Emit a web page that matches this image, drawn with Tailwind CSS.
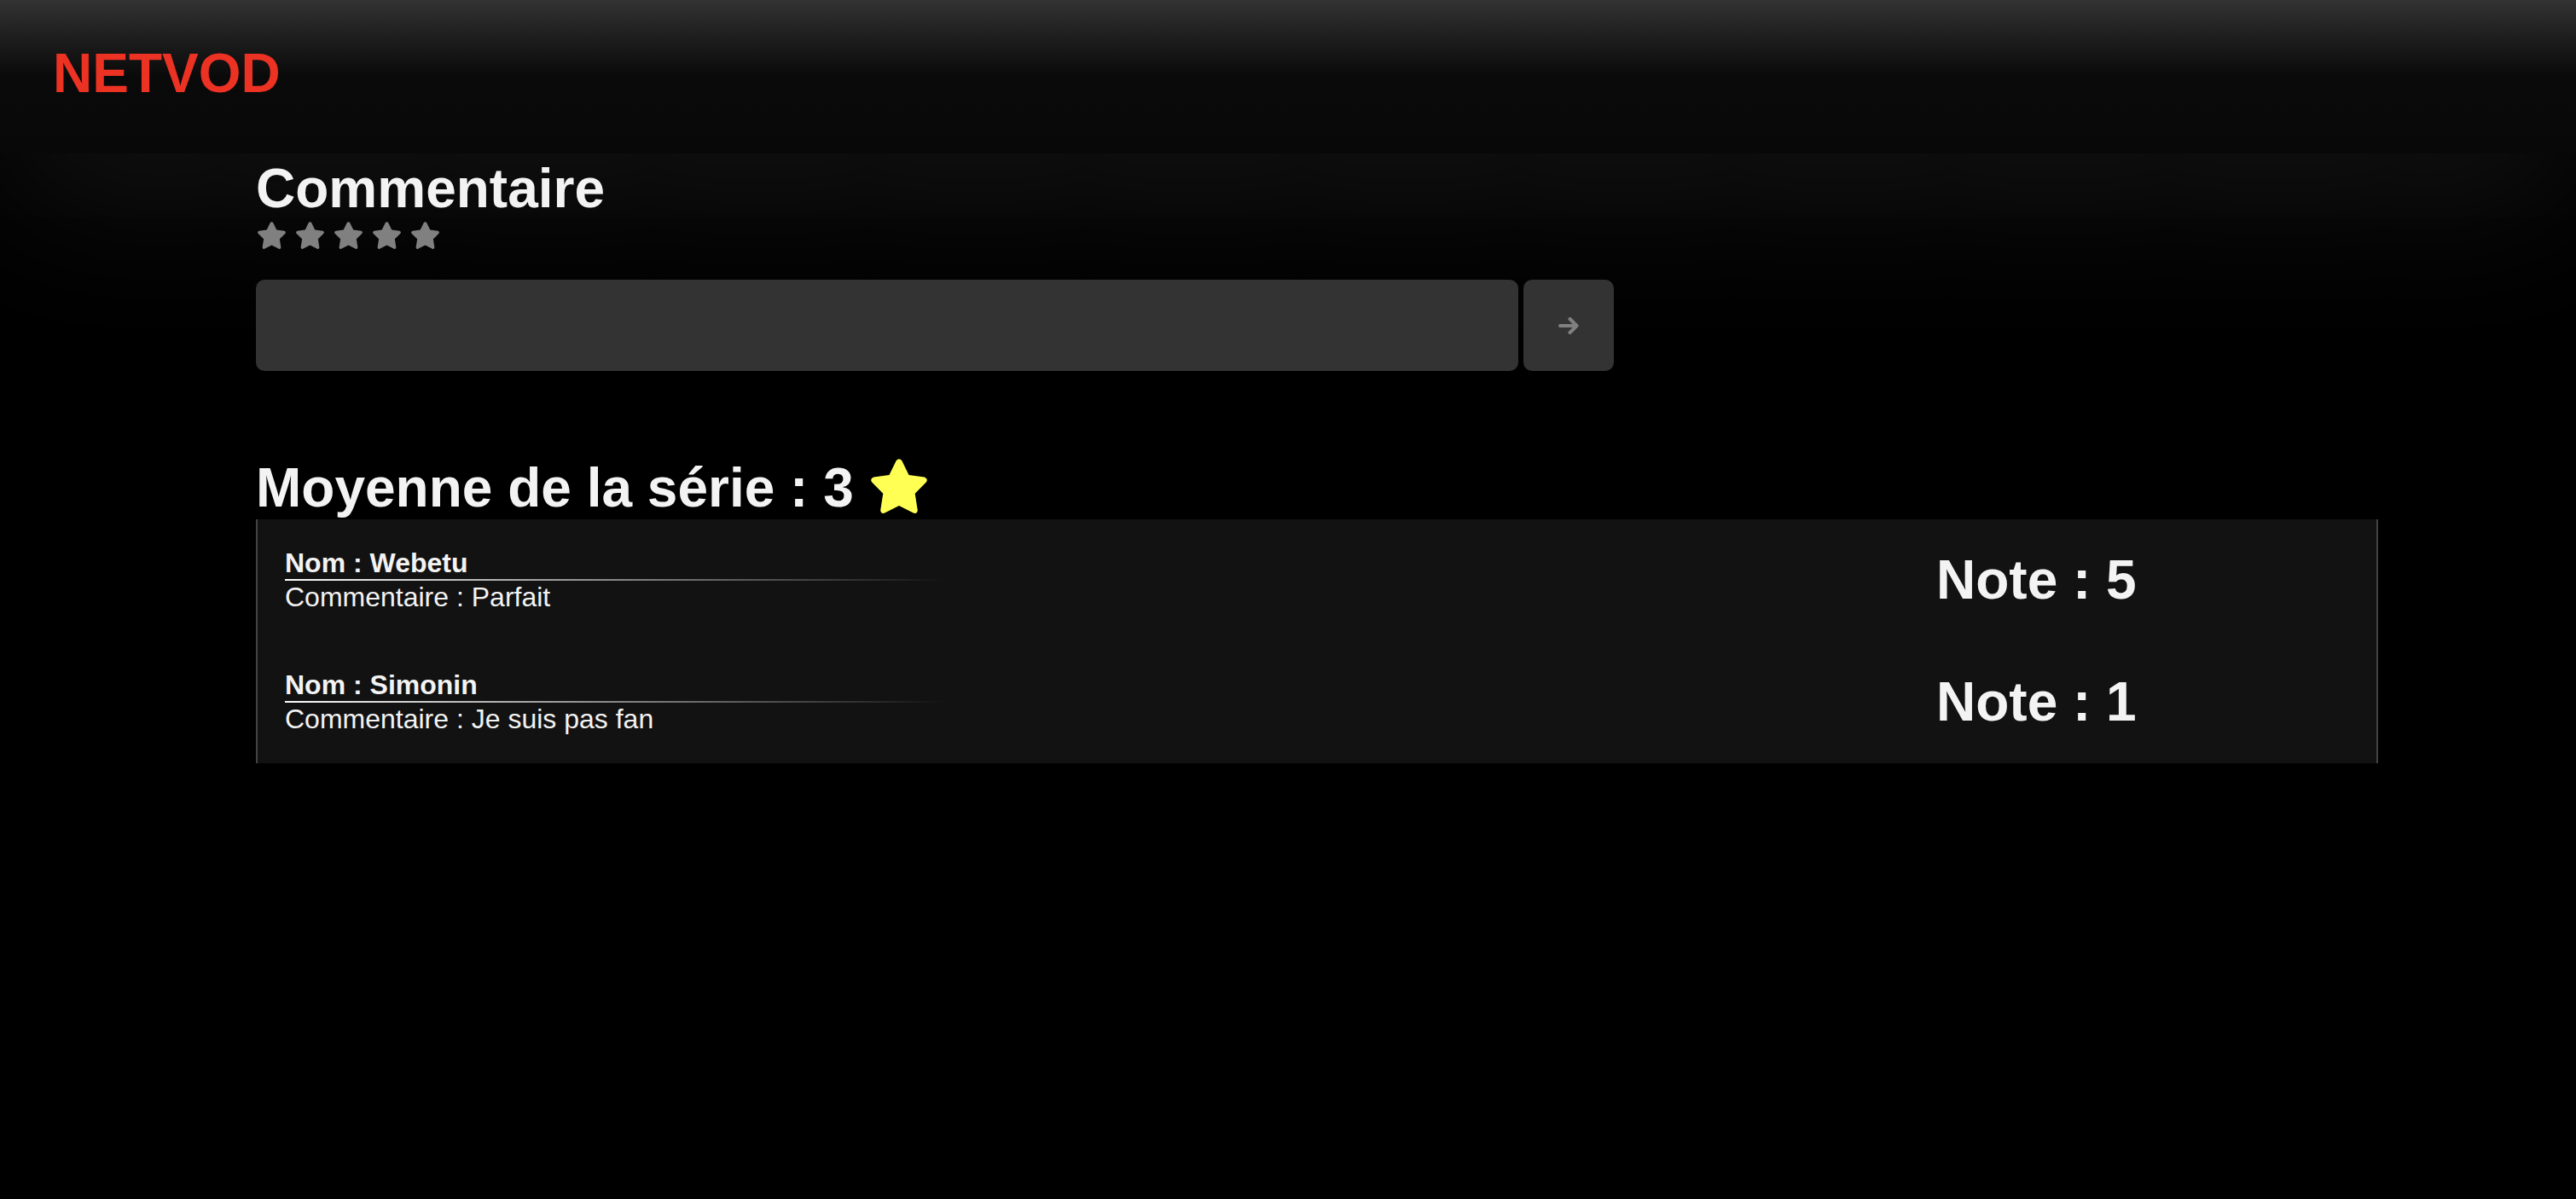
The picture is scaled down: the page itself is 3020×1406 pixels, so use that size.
<!DOCTYPE html>
<html lang="fr">
<head>
<meta charset="utf-8">
<meta name="viewport" content="width=device-width, initial-scale=1">
<title>NETVOD</title>
<script src="https://cdn.jsdelivr.net/npm/@tailwindcss/browser@4"></script>
</head>
<body class="min-h-screen bg-black font-['Liberation_Sans',Arial,sans-serif] text-[32px] leading-[37px] text-[#f3f3f3]">
<svg class="hidden" aria-hidden="true">
  <symbol id="star" viewBox="0 0 66 64">
    <path d="M29.800 2Q33-1.500 36.200 2L44.500 18.900L62.800 21.400Q67.400 23.300 65 27.300L51.700 40.700L54.800 60.500Q54.200 65 49.800 63.600L33 55.100L16.200 63.600Q11.800 65 11.200 60.500L14.300 40.700L1 27.300Q-1.400 23.300 3.200 21.400L21.500 18.900Z" fill="currentColor"/>
  </symbol>
</svg>
<header class="h-[180px] bg-linear-to-b from-[#333] via-[#0a0a0a] via-50% to-[#080808] px-[62px] pt-[50px] shadow-[0_50px_190px_#161616]">
  <a href="#" class="text-[64px] leading-[73px] font-bold text-[#eb3223]">NETVOD</a>
</header>
<main class="relative pr-[232px] pl-[300px]">
  <section class="pt-[5px]">
    <h1 class="text-[64px] leading-[73px] font-bold">Commentaire</h1>
    <div class="flex gap-3 pt-0.5 pl-0.5 text-[#808080]">
      <button type="button" aria-label="1 étoile"><svg class="h-8 w-[33px]"><use href="#star"/></svg></button>
      <button type="button" aria-label="2 étoiles"><svg class="h-8 w-[33px]"><use href="#star"/></svg></button>
      <button type="button" aria-label="3 étoiles"><svg class="h-8 w-[33px]"><use href="#star"/></svg></button>
      <button type="button" aria-label="4 étoiles"><svg class="h-8 w-[33px]"><use href="#star"/></svg></button>
      <button type="button" aria-label="5 étoiles"><svg class="h-8 w-[33px]"><use href="#star"/></svg></button>
    </div>
    <form class="mt-9 flex h-[107px] w-[64%] gap-1.5">
      <input type="text" aria-label="Commentaire" class="min-w-0 flex-1 rounded-[10px] bg-[#333] px-8 outline-none">
      <button type="button" aria-label="Envoyer" class="flex w-[106px] items-center justify-center rounded-[10px] bg-[#333] text-[#808080]">
        <svg class="h-5 w-6" viewBox="0 0 24 20" fill="none" stroke="currentColor" stroke-width="4" stroke-linecap="round" stroke-linejoin="round"><path d="M2 10H21M13.500 2L21.500 10L13.500 18"/></svg>
      </button>
    </form>
  </section>
  <section class="mt-[101px]">
    <h2 class="flex items-start gap-5 text-[64px] leading-[73px] font-bold">Moyenne de la série : 3 <svg class="mt-0.5 h-16 w-[66px] text-[#ffff54]" role="img" aria-label="étoile"><use href="#star"/></svg></h2>
    <ul class="border-x-2 border-[#444] bg-[#121212]">
      <li class="flex h-[143px] items-center px-8">
        <div class="w-[80%]">
          <p class="font-bold">Nom : Webetu</p>
          <div class="mb-px h-0.5 w-[40%] bg-linear-to-r from-white to-transparent"></div>
          <p>Commentaire : Parfait</p>
        </div>
        <p class="text-[64px] leading-[73px] font-bold">Note : 5</p>
      </li>
      <li class="flex h-[143px] items-center px-8">
        <div class="w-[80%]">
          <p class="font-bold">Nom : Simonin</p>
          <div class="mb-px h-0.5 w-[40%] bg-linear-to-r from-white to-transparent"></div>
          <p>Commentaire : Je suis pas fan</p>
        </div>
        <p class="text-[64px] leading-[73px] font-bold">Note : 1</p>
      </li>
    </ul>
  </section>
</main>
</body>
</html>
